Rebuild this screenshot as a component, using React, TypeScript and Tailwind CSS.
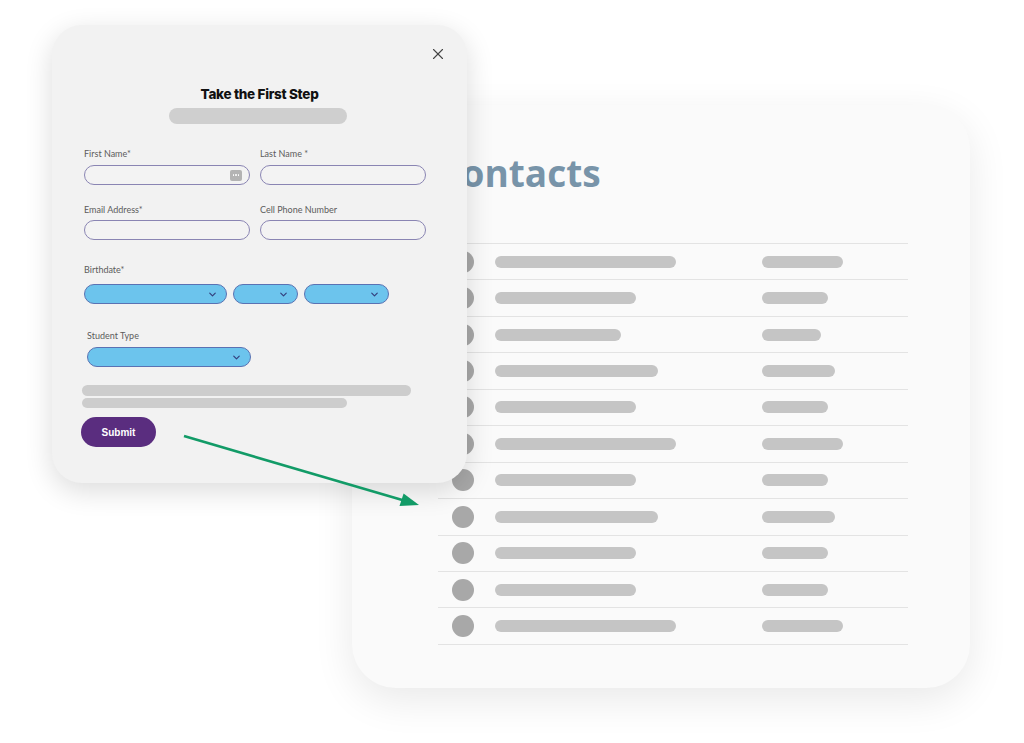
import { X, ChevronDown } from 'lucide-react';

const rows = [
  { name: 'w-[181px]', tag: 'w-[81px]' },
  { name: 'w-[141px]', tag: 'w-[66px]' },
  { name: 'w-[126px]', tag: 'w-[59px]' },
  { name: 'w-[163px]', tag: 'w-[73px]' },
  { name: 'w-[141px]', tag: 'w-[66px]' },
  { name: 'w-[181px]', tag: 'w-[81px]' },
  { name: 'w-[141px]', tag: 'w-[66px]' },
  { name: 'w-[163px]', tag: 'w-[73px]' },
  { name: 'w-[141px]', tag: 'w-[66px]' },
  { name: 'w-[141px]', tag: 'w-[66px]' },
  { name: 'w-[181px]', tag: 'w-[81px]' },
];

const labelClass = 'block text-[9px] leading-[12px] text-[#5c5c5c]';
const inputClass = 'h-[20px] rounded-full border border-[#8a85b3] bg-[#f3f3f3]';

const Select = ({ width }: { width: string }) => (
  <div className={`${width} h-[20px] rounded-full border border-[#5a72b3] bg-[#6cc4ed] flex items-center justify-end pr-[8px]`}>
    <ChevronDown size={11} strokeWidth={2.6} className="text-[#34407e]" />
  </div>
);

const ContactsCard = () => (
  <div className="absolute left-[352px] top-[105px] w-[618px] h-[583px] rounded-[44px] bg-[#fafafa] shadow-[0_12px_40px_rgba(0,0,0,0.09)] pt-[46px] pl-[86px]">
    <h1 className="text-[37px] leading-[44px] font-bold text-[#7894a9] font-['Open_Sans',sans-serif]">Contacts</h1>
    <div className="mt-[48px] w-[470px] border-t border-[#e3e3e3]">
      {rows.map((r, i) => (
        <div key={i} className="h-[36.45px] border-b border-[#e3e3e3] flex items-center pl-[14px]">
          <div className="w-[22px] h-[22px] rounded-full bg-[#a8a8a8]" />
          <div className="ml-[21px] w-[267px]">
            <div className={`${r.name} h-[12px] rounded-md bg-[#c5c5c5]`} />
          </div>
          <div className={`${r.tag} h-[12px] rounded-md bg-[#c5c5c5]`} />
        </div>
      ))}
    </div>
  </div>
);

const FormCard = () => (
  <div className="absolute left-[52px] top-[25px] w-[415px] h-[458px] rounded-[30px] bg-[#f2f2f2] shadow-[0_8px_28px_rgba(0,0,0,0.14)] font-['Lato',sans-serif]">
    <div className="flex justify-end pt-[20px] pr-[20px]">
      <X size={18} strokeWidth={1.5} className="text-[#444]" />
    </div>
    <div className="pl-[32px] pr-[41px]">
      <h2 className="mt-[22px] pl-[9px] text-center text-[13.5px] leading-[18px] font-extrabold text-[#111] font-['Inter',sans-serif] tracking-[-0.3px]">
        Take the First Step
      </h2>
      <div className="ml-[85px] mt-[5px] w-[178px] h-[16px] rounded-full bg-[#cfcfcf]" />

      <div className="mt-[24px] grid grid-cols-2 gap-x-[10px]">
        <div>
          <label className={labelClass}>First Name*</label>
          <div className={`${inputClass} mt-[5px] flex items-center justify-end pr-[7px]`}>
            <div className="w-[12px] h-[11px] rounded-[2px] bg-[#b3b3b3] flex items-center justify-center gap-[1px]">
              <span className="w-[1.5px] h-[1.5px] rounded-full bg-white" />
              <span className="w-[1.5px] h-[1.5px] rounded-full bg-white" />
              <span className="w-[1.5px] h-[1.5px] rounded-full bg-white" />
            </div>
          </div>
        </div>
        <div>
          <label className={labelClass}>Last Name *</label>
          <div className={`${inputClass} mt-[5px]`} />
        </div>
        <div className="mt-[19px]">
          <label className={labelClass}>Email Address*</label>
          <div className={`${inputClass} mt-[4px]`} />
        </div>
        <div className="mt-[19px]">
          <label className={labelClass}>Cell Phone Number</label>
          <div className={`${inputClass} mt-[4px]`} />
        </div>
      </div>

      <label className={`${labelClass} mt-[24px]`}>Birthdate*</label>
      <div className="mt-[8px] flex gap-[6px]">
        <Select width="w-[143px]" />
        <Select width="w-[65px]" />
        <Select width="w-[85px]" />
      </div>

      <div className="ml-[3px]">
        <label className={`${labelClass} mt-[26px]`}>Student Type</label>
        <div className="mt-[5px]">
          <Select width="w-[164px]" />
        </div>
      </div>

      <div className="-ml-[2px]">
        <div className="mt-[18px] w-[329px] h-[11px] rounded-full bg-[#cdcdcd]" />
        <div className="mt-[2px] w-[265px] h-[10px] rounded-full bg-[#cdcdcd]" />
        <button className="mt-[9px] -ml-[1px] w-[75px] h-[30px] rounded-full bg-[#5a2d7f] text-white text-[10px] font-bold font-['Liberation_Sans',sans-serif]">
          Submit
        </button>
      </div>
    </div>
  </div>
);

const Arrow = () => (
  <svg className="absolute inset-0 pointer-events-none" width="1024" height="743" viewBox="0 0 1024 743">
    <line x1="184" y1="436" x2="404" y2="500.5" stroke="#129b67" strokeWidth="2.6" />
    <polygon points="419,505 399.5,506 403.6,493.5" fill="#129b67" />
  </svg>
);

export default function App() {
  return (
    <div className="relative w-[1024px] h-[743px] bg-white overflow-hidden">
      <ContactsCard />
      <FormCard />
      <Arrow />
    </div>
  );
}
